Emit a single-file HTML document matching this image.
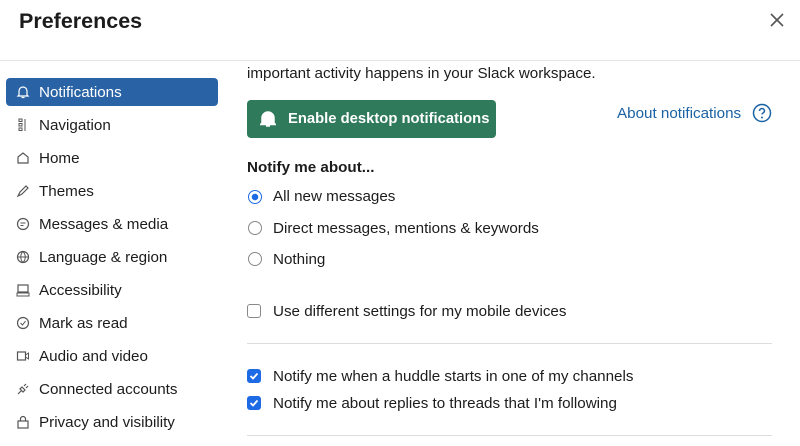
<html><head><style>
body{margin:0;width:800px;height:446px;background:#fff;font-family:"Liberation Sans",sans-serif;color:#1d1c1d;position:relative;overflow:hidden}
.a{position:absolute;white-space:nowrap}
.t{font-size:15.2px;line-height:18px}
.nav{position:absolute;left:6px;width:212px;height:28px;border-radius:4px}
.nav span{position:absolute;left:33px;top:6px;font-size:15.2px}
.nav svg{position:absolute;left:10px;top:7px}
.rad{position:absolute;left:248px;width:12px;height:12px;border:1px solid #888;border-radius:50%}
.cb{position:absolute;left:247px;width:12px;height:12px;border:1px solid #888;border-radius:3px}
.cbc{background:#1d6ae5;border-color:#1d6ae5}
.hr{position:absolute;left:247px;width:525px;height:1px;background:#ddd}
</style></head><body>
<div class="a" style="left:19px;top:9px;font-size:21.5px;font-weight:bold">Preferences</div>
<svg class="a" style="left:769px;top:12px" width="16" height="16"><path d="M2 2L14 14M14 2L2 14" stroke="#555" stroke-width="1.6"/></svg>
<div class="a" style="left:0;top:60px;width:800px;height:1px;background:#e5e5e5"></div>

<div class="nav" style="top:78px;background:#2a63a5;color:#fff"><svg width="14" height="14"><path d="M3 10V6a4 4 0 018 0v4l1 1H2zM5.5 12.5h3" stroke="#fff" fill="none" stroke-width="1.2"/></svg><span>Notifications</span></div>
<div class="nav" style="top:111px"><svg width="14" height="14"><rect x="3" y="1" width="3" height="2.5" fill="none" stroke="#555"/><rect x="3" y="5.5" width="3" height="2.5" fill="none" stroke="#555"/><rect x="3" y="10" width="3" height="2.5" fill="none" stroke="#555"/><path d="M9 1v12" stroke="#555"/></svg><span>Navigation</span></div>
<div class="nav" style="top:144px"><svg width="14" height="14"><path d="M2 6l5-4 5 4v6H2z" fill="none" stroke="#555" stroke-width="1.2"/></svg><span>Home</span></div>
<div class="nav" style="top:177px"><svg width="14" height="14"><path d="M2 12l2-4 6-6 2 2-6 6z" fill="none" stroke="#555" stroke-width="1.2"/></svg><span>Themes</span></div>
<div class="nav" style="top:210px"><svg width="14" height="14"><circle cx="7" cy="7" r="5.5" fill="none" stroke="#555" stroke-width="1.2"/><path d="M4.5 6h5M4.5 8.5h3" stroke="#555"/></svg><span>Messages &amp; media</span></div>
<div class="nav" style="top:243px"><svg width="14" height="14"><circle cx="7" cy="7" r="5.5" fill="none" stroke="#555" stroke-width="1.2"/><path d="M1.5 7h11M7 1.5c-3 3-3 8 0 11M7 1.5c3 3 3 8 0 11" fill="none" stroke="#555"/></svg><span>Language &amp; region</span></div>
<div class="nav" style="top:276px"><svg width="14" height="14"><rect x="2" y="2" width="10" height="7" fill="none" stroke="#555" stroke-width="1.2"/><rect x="1" y="10" width="12" height="3" fill="none" stroke="#555"/></svg><span>Accessibility</span></div>
<div class="nav" style="top:309px"><svg width="14" height="14"><circle cx="7" cy="7" r="5.5" fill="none" stroke="#555" stroke-width="1.2"/><path d="M4.5 7l2 2 3-4" fill="none" stroke="#555"/></svg><span>Mark as read</span></div>
<div class="nav" style="top:342px"><svg width="14" height="14"><rect x="1.5" y="3" width="8" height="8" fill="none" stroke="#555" stroke-width="1.2"/><path d="M9.5 6l3-2v6l-3-2" fill="none" stroke="#555"/></svg><span>Audio and video</span></div>
<div class="nav" style="top:375px"><svg width="14" height="14"><path d="M2 12l3-3M6 5l3 3-2 2-3-3zM8 4l2-2M10 6l2-2" fill="none" stroke="#555" stroke-width="1.2"/></svg><span>Connected accounts</span></div>
<div class="nav" style="top:408px"><svg width="14" height="14"><rect x="2" y="6" width="10" height="7" fill="none" stroke="#555" stroke-width="1.2"/><path d="M4.5 6V4a2.5 2.5 0 015 0v2" fill="none" stroke="#555" stroke-width="1.2"/></svg><span>Privacy and visibility</span></div>

<div class="a t" style="left:247px;top:65px">important activity happens in your Slack workspace.</div>
<div class="a" style="left:247px;top:100px;width:249px;height:38px;background:#2f7a5b;border-radius:4px;color:#fff;font-weight:bold;font-size:14.8px">
<svg class="a" style="left:13px;top:10px" width="16" height="18"><path d="M2 13V8a6 6 0 0112 0v5l1.5 1.5H.5zM6 16h4" fill="#fff" stroke="#fff" stroke-width="1.5"/></svg>
<span class="a" style="left:41px;top:11px">Enable desktop notifications</span></div>
<div class="a t" style="left:617px;top:105px;color:#1a62a5">About notifications</div>
<svg class="a" style="left:752px;top:103px" width="20" height="20"><circle cx="10" cy="10" r="8.5" fill="none" stroke="#1a62a5" stroke-width="1.5"/><path d="M7.5 8a2.5 2.5 0 115 0c0 1.8-2.5 1.8-2.5 3.5" fill="none" stroke="#1a62a5" stroke-width="1.5"/><circle cx="10" cy="14.5" r="1" fill="#1a62a5"/></svg>
<div class="a t" style="left:247px;top:159px;font-weight:bold">Notify me about...</div>
<div class="rad" style="top:190px;border-color:#1d6ae5;background:radial-gradient(circle,#1d6ae5 3px,#fff 3.5px)"></div>
<div class="a t" style="left:273px;top:188px">All new messages</div>
<div class="rad" style="top:221px"></div>
<div class="a t" style="left:273px;top:220px">Direct messages, mentions &amp; keywords</div>
<div class="rad" style="top:252px"></div>
<div class="a t" style="left:273px;top:251px">Nothing</div>
<div class="cb" style="top:304px"></div>
<div class="a t" style="left:273px;top:303px">Use different settings for my mobile devices</div>
<div class="hr" style="top:343px"></div>
<div class="cb cbc" style="top:369px"><svg width="12" height="12" style="position:absolute;left:0;top:0"><path d="M2.5 6l2.5 2.5 4.5-5" fill="none" stroke="#fff" stroke-width="1.8"/></svg></div>
<div class="a t" style="left:273px;top:368px">Notify me when a huddle starts in one of my channels</div>
<div class="cb cbc" style="top:396px"><svg width="12" height="12" style="position:absolute;left:0;top:0"><path d="M2.5 6l2.5 2.5 4.5-5" fill="none" stroke="#fff" stroke-width="1.8"/></svg></div>
<div class="a t" style="left:273px;top:395px">Notify me about replies to threads that I'm following</div>
<div class="hr" style="top:435px"></div>
</body></html>
